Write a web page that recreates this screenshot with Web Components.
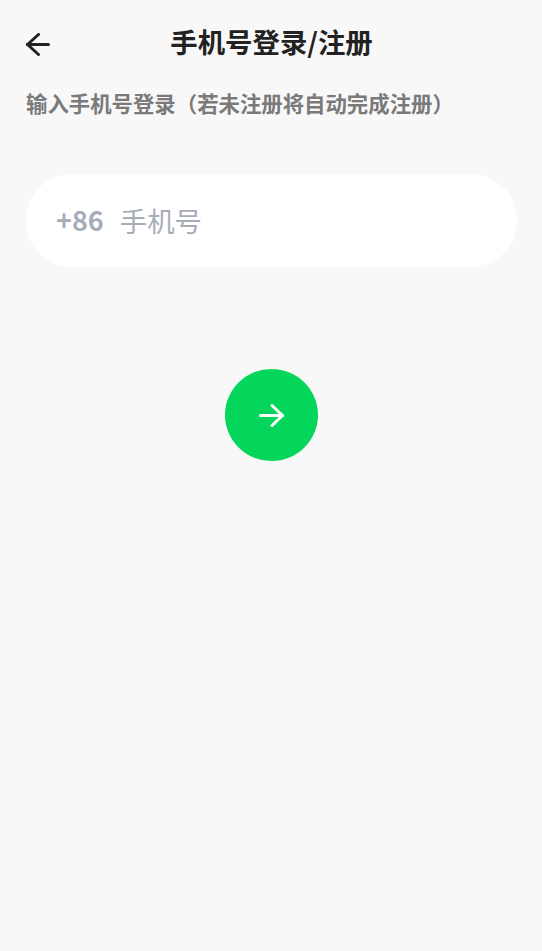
<!DOCTYPE html>
<html lang="zh">
<head>
<meta charset="utf-8">
<title>手机号登录/注册</title>
<style>
html, body { margin: 0; height: 100%; background: #f8f8f8; }
body { font-family: "Noto Sans CJK SC", "Noto Sans", sans-serif; }
</style>
</head>
<body>
<login-page>
	<nav-bar slot="nav">手机号登录/注册</nav-bar>
	<hint-text slot="hint">输入手机号登录（若未注册将自动完成注册）</hint-text>
	<phone-field slot="field" code="+86" placeholder="手机号"></phone-field>
	<next-button slot="action"></next-button>
</login-page>
<script>
class LoginPage extends HTMLElement {
	constructor() {
		super();
		this.attachShadow({ mode: "open" });
		this.shadowRoot.innerHTML = `
      <style>
        :host {
          display: flex;
          flex-direction: column;
          box-sizing: border-box;
          height: 951px;
          padding: 0 25px 0 26px;
          background: #f8f8f8;
          overflow: hidden;
        }
        .field { margin-top: 56px; }
        .action { display: flex; justify-content: center; margin-top: 102px; }
      </style>
      <slot name="nav"></slot>
      <slot name="hint"></slot>
      <div class="field"><slot name="field"></slot></div>
      <div class="action"><slot name="action"></slot></div>
    `;
	}
}
customElements.define("login-page", LoginPage);

class NavBar extends HTMLElement {
	constructor() {
		super();
		this.attachShadow({ mode: "open" });
		this.shadowRoot.innerHTML = `
      <style>
        :host {
          display: grid;
          grid-template-columns: 1fr auto 1fr;
          align-items: center;
          height: 88px;
          color: #222222;
        }
        svg { display: block; }
        .title {
          font-size: 27.4px;
          font-weight: 700;
          line-height: 82px;
          height: 88px;
        }
      </style>
      <svg width="24" height="23" viewBox="0 0 24 23" fill="none" stroke="#222222" stroke-width="3" stroke-linecap="round" stroke-linejoin="round">
        <path d="M1.5 11.5H22.5"/>
        <path d="M12.5 1.5L1.5 11.5L12.5 21.5"/>
      </svg>
      <div class="title"><slot></slot></div>
      <span></span>
    `;
	}
}
customElements.define("nav-bar", NavBar);

class HintText extends HTMLElement {
	constructor() {
		super();
		this.attachShadow({ mode: "open" });
		this.shadowRoot.innerHTML = `
      <style>
        :host {
          display: block;
          height: 30px;
          font-size: 21.4px;
          font-weight: 700;
          line-height: 30px;
          color: #7a7a7a;
          white-space: nowrap;
        }
      </style>
      <slot></slot>
    `;
	}
}
customElements.define("hint-text", HintText);

class PhoneField extends HTMLElement {
	constructor() {
		super();
		this.attachShadow({ mode: "open" });
		this.shadowRoot.innerHTML = `
      <style>
        :host {
          display: flex;
          align-items: center;
          gap: 16px;
          box-sizing: border-box;
          height: 93px;
          padding: 0 30px 2px;
          background: #ffffff;
          border-radius: 46.5px;
        }
        .code {
          font-size: 27px;
          font-weight: 700;
          color: #a7adb8;
        }
        .placeholder {
          font-size: 27.4px;
          font-weight: 400;
          color: #a7adb8;
        }
      </style>
      <span class="code"></span>
      <span class="placeholder"></span>
    `;
	}
	connectedCallback() {
		this.shadowRoot.querySelector(".code").textContent = this.getAttribute("code");
		this.shadowRoot.querySelector(".placeholder").textContent = this.getAttribute("placeholder");
	}
}
customElements.define("phone-field", PhoneField);

class NextButton extends HTMLElement {
	constructor() {
		super();
		this.attachShadow({ mode: "open" });
		this.shadowRoot.innerHTML = `
      <style>
        :host {
          display: flex;
          align-items: center;
          justify-content: center;
          width: 92.5px;
          height: 92px;
          border-radius: 50%;
          background: #04d65c;
        }
        svg { display: block; }
      </style>
      <svg width="25" height="23" viewBox="0 0 25 23" fill="none" stroke="#ffffff" stroke-width="3" stroke-linecap="round" stroke-linejoin="round">
        <path d="M1.5 11.5H23.5"/>
        <path d="M13 1.5L23.5 11.5L13 21.5"/>
      </svg>
    `;
	}
}
customElements.define("next-button", NextButton);
</script>
</body>
</html>
